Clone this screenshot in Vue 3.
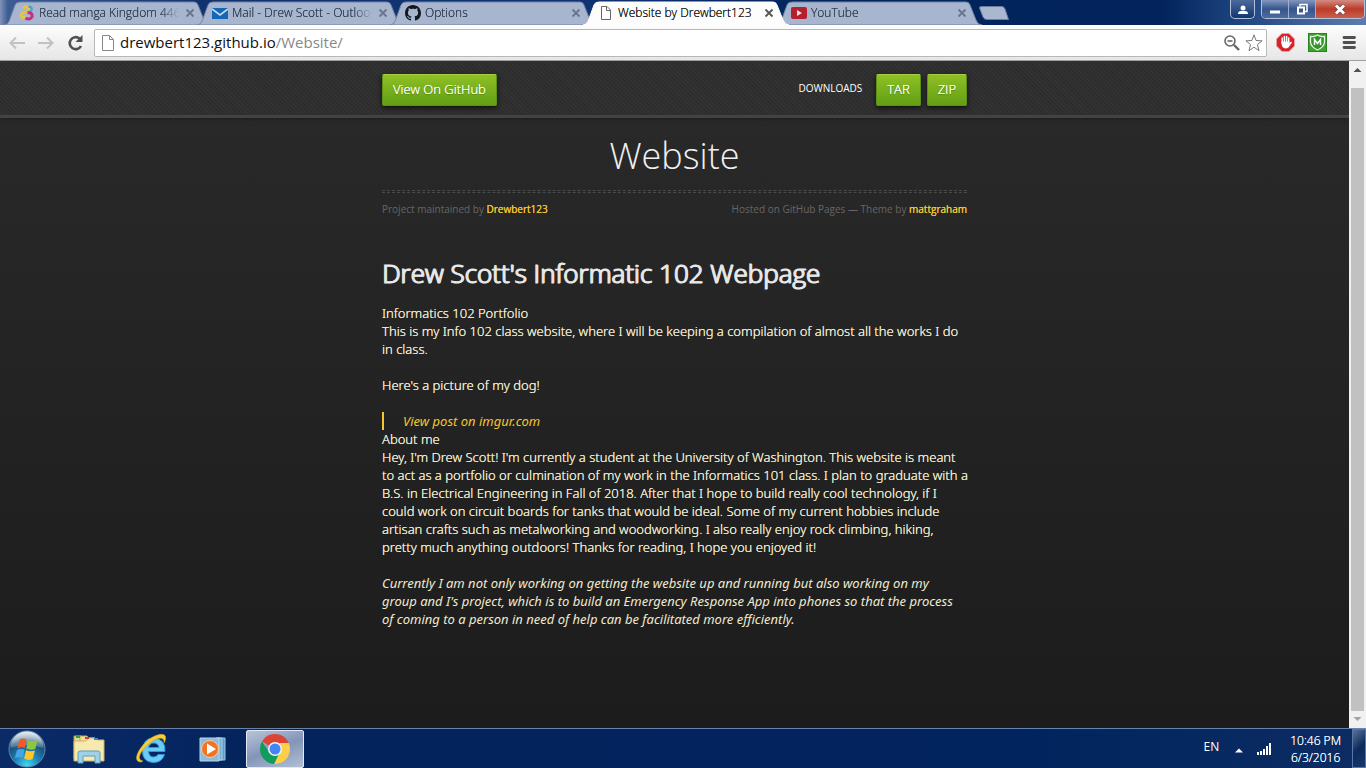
<script setup>
const tabs = [
  { title: 'Read manga Kingdom 446', icon: 'manga', active: false },
  { title: 'Mail - Drew Scott - Outlook', icon: 'mail', active: false },
  { title: 'Options', icon: 'github', active: false },
  { title: 'Website by Drewbert123', icon: 'page', active: true },
  { title: 'YouTube', icon: 'youtube', active: false },
]
</script>

<template>
  <div class="desktop">
    <header class="browser">
      <div class="strip">
        <nav class="tabs" aria-label="Tabs">
          <div v-for="t in tabs" :key="t.title" class="tab" :class="{ active: t.active }">
            <svg class="shape" viewBox="0 0 206 24" preserveAspectRatio="none" aria-hidden="true">
              <path d="M0 24 C5 23 5 20 7 15 L11 4 Q12 1 16 1 H190 Q193 1 194 4 L200 19 Q202 24 206 24 Z" />
            </svg>
            <svg v-if="t.icon === 'manga'" class="fav" viewBox="0 0 16 16">
              <path d="M4 3.500 Q7 0 9.500 3 Q10.500 6 7 7.500" fill="none" stroke="#ecc53c" stroke-width="2.800" />
              <path d="M9.500 1.500 Q13.500 2 12.500 5 Q11.500 7 9 7.500" fill="none" stroke="#4aa3cf" stroke-width="2.400" />
              <path d="M6 7.500 Q1 8 2.500 11.500 Q4 13.500 7 11.500" fill="none" stroke="#ecc53c" stroke-width="2.600" />
              <path d="M8.500 7.500 Q14 7.500 13 12 Q10.500 15.500 6.500 13" fill="none" stroke="#c52c8c" stroke-width="3" />
            </svg>
            <svg v-else-if="t.icon === 'mail'" class="fav" viewBox="0 0 16 16">
              <rect x="0" y="3" width="16" height="11" fill="#1268b4" />
              <path d="M0 4 L8 10 L16 4" fill="none" stroke="#c9d9ec" stroke-width="1.6" />
            </svg>
            <svg v-else-if="t.icon === 'github'" class="fav" viewBox="0 0 16 16">
              <path fill="#12171f" d="M8 0C3.58 0 0 3.58 0 8c0 3.54 2.29 6.53 5.47 7.59.4.07.55-.17.55-.38 0-.19-.01-.82-.01-1.49-2.01.37-2.53-.49-2.69-.94-.09-.23-.48-.94-.82-1.13-.28-.15-.68-.52-.01-.53.63-.01 1.08.58 1.23.82.72 1.21 1.87.87 2.33.66.07-.52.28-.87.51-1.07-1.78-.2-3.64-.89-3.64-3.95 0-.87.31-1.59.82-2.15-.08-.2-.36-1.02.08-2.12 0 0 .67-.21 2.2.82.64-.18 1.32-.27 2-.27s1.36.09 2 .27c1.53-1.04 2.2-.82 2.2-.82.44 1.1.16 1.92.08 2.12.51.56.82 1.27.82 2.15 0 3.07-1.87 3.75-3.65 3.95.29.25.54.73.54 1.48 0 1.07-.01 1.93-.01 2.2 0 .21.15.46.55.38A8.01 8.01 0 0 0 16 8c0-4.42-3.58-8-8-8z" />
            </svg>
            <svg v-else-if="t.icon === 'page'" class="fav" viewBox="0 0 16 16">
              <path d="M3.5 1.5 H9 L12.500 5 V14.500 H3.500 Z M8.500 1.500 V5.500 H12.500" fill="#fff" stroke="#666" />
            </svg>
            <svg v-else class="fav" viewBox="0 0 16 16">
              <rect x="0" y="2" width="16" height="12" rx="2" fill="#b5202c" />
              <path d="M6 5 L11 8 L6 11 Z" fill="#e8dfe6" />
            </svg>
            <span class="title">{{ t.title }}</span>
            <button class="x" type="button" aria-label="Close tab">
              <svg viewBox="0 0 10 10"><path d="M1.500 1.500 L8.500 8.500 M8.500 1.500 L1.500 8.500" stroke-width="1.800" /></svg>
            </button>
          </div>
        </nav>
        <button class="newtab" type="button" aria-label="New tab">
          <svg viewBox="0 0 30 14"><path d="M3 0.500 H23 Q25 0.500 26 3 L29.500 13.500 H8 Q5 13.500 4 11 L0.500 2 Q0 0.500 3 0.500 Z" fill="#a9b8d0" stroke="#6b7c9c" /></svg>
        </button>
        <div class="wincontrols">
          <button class="user" type="button" aria-label="Profile">
            <svg viewBox="0 0 10 10"><circle cx="5" cy="3" r="2.500" fill="#fff" /><path d="M0 9 Q0 6 3 6 H7 Q10 6 10 9 Z" fill="#fff" /></svg>
          </button>
          <div class="group">
            <button class="min" type="button" aria-label="Minimize"><svg viewBox="0 0 12 12"><rect x="1" y="7" width="10" height="3" fill="#fff" /></svg></button>
            <button class="max" type="button" aria-label="Restore"><svg viewBox="0 0 12 12"><path d="M4 3 V1 H11 V8 H9" fill="none" stroke="#fff" stroke-width="1.500" /><rect x="2" y="4" width="6" height="6" fill="none" stroke="#fff" stroke-width="2" /></svg></button>
            <button class="close" type="button" aria-label="Close"><svg viewBox="0 0 12 12"><path d="M2 2 L10 10 M10 2 L2 10" stroke="#62424d" stroke-width="4.500" /><path d="M2 2 L10 10 M10 2 L2 10" stroke="#fff" stroke-width="3" /></svg></button>
          </div>
        </div>
      </div>

      <div class="toolbar">
        <button class="tool back" type="button" aria-label="Back"><svg viewBox="0 0 18 18"><path d="M17 9 H3 M8 3.500 L2.500 9 L8 14.500" fill="none" stroke="#c2c2c2" stroke-width="2" /></svg></button>
        <button class="tool fwd" type="button" aria-label="Forward"><svg viewBox="0 0 18 18"><path d="M1 9 H15 M10 3.500 L15.500 9 L10 14.500" fill="none" stroke="#c2c2c2" stroke-width="2" /></svg></button>
        <button class="tool reload" type="button" aria-label="Reload"><svg viewBox="0 0 18 18"><path d="M15 12 A6 6 0 1 1 13.500 4.500" fill="none" stroke="#505050" stroke-width="2.600" /><path d="M16.500 1 V8 H9.500 Z" fill="#505050" /></svg></button>
        <div class="omnibox">
          <svg class="doc" viewBox="0 0 12 16"><path d="M1 0.500 H7.500 L11.500 4.500 V15.500 H0.500 V0.500 Z M7.500 0.500 V4.500 H11.500" fill="#fff" stroke="#888" /></svg>
          <a class="url" href="#"><span class="host">drewbert123.github.io</span>/Website/</a>
          <button class="mini" type="button" aria-label="Zoom"><svg viewBox="0 0 18 18"><circle cx="7" cy="7" r="5" fill="none" stroke="#666" stroke-width="1.600" /><path d="M4.500 7 H9.500" stroke="#666" stroke-width="1.600" /><path d="M11 11 L16 16" stroke="#666" stroke-width="2.400" /></svg></button>
          <button class="mini" type="button" aria-label="Bookmark"><svg viewBox="0 0 20 20"><path d="M10 1 L12.300 7.200 L19 7.600 L13.800 11.700 L15.600 18.500 L10 14.700 L4.400 18.500 L6.200 11.700 L1 7.600 L7.700 7.200 Z" fill="#fff" stroke="#777" stroke-width="1.100" /></svg></button>
        </div>
        <button class="ext" type="button" aria-label="Ad blocker"><svg viewBox="0 0 19 19"><path d="M6 0.500 H13 L18.500 6 V13 L13 18.500 H6 L0.500 13 V6 Z" fill="#d5232b" stroke="#e9a0a2" /><path d="M6.200 10 V5 M8.400 9 V3.500 M10.600 9 V3.500 M12.700 10 V5" stroke="#fff" stroke-width="1.500" stroke-linecap="round" /><path d="M5.500 8.500 H13.400 V10.500 L15 8.500 L16 9.500 L12.500 14.500 Q9 16.500 6.500 14 Q5.500 12.500 5.500 10 Z" fill="#fff" /></svg></button>
        <button class="ext" type="button" aria-label="Site advisor"><svg viewBox="0 0 19 19"><rect x="0.500" y="0.500" width="18" height="18" fill="#3ca52d" stroke="#23851b" /><path d="M2.500 3.500 Q7 4 9.500 2 Q12 4 16.500 3.500 V9 Q16 14 9.500 17 Q3 14 2.500 9 Z" fill="#35932c" stroke="#e5f5e2" stroke-width="1.300" /><path d="M6.500 12 V6.500 L9.500 10.500 L12.500 6.500 V12" fill="none" stroke="#fff" stroke-width="1.500" /></svg></button>
        <button class="ext menu" type="button" aria-label="Menu"><svg viewBox="0 0 19 19"><path d="M4 4.500 H14.500 M4 9.500 H14.500 M4 14.500 H14.500" stroke="#505050" stroke-width="2.800" stroke-linecap="round" /></svg></button>
      </div>
    </header>

    <div class="viewport">
      <div class="page">
        <div class="topbar">
          <div class="wrap bar">
            <a class="btn" href="#">View On GitHub</a>
            <div class="downloads">
              <span class="label">DOWNLOADS</span>
              <a class="btn" href="#">TAR</a>
              <a class="btn" href="#">ZIP</a>
            </div>
          </div>
        </div>
        <main class="wrap">
          <div class="titlebox">
            <h1>Website</h1>
          </div>
          <div class="credits">
            <span>Project maintained by <a href="#">Drewbert123</a></span>
            <span>Hosted on GitHub Pages — Theme by <a href="#">mattgraham</a></span>
          </div>
          <h2>Drew Scott's Informatic 102 Webpage</h2>
          <div class="copy">
            <p class="flush">Informatics 102 Portfolio</p>
            <p>This is my Info 102 class website, where I will be keeping a compilation of almost all the works I do<br />in class.</p>
            <p>Here's a picture of my dog!</p>
            <blockquote><a href="#">View post on imgur.com</a></blockquote>
            <p class="flush">About me</p>
            <p>Hey, I'm Drew Scott! I'm currently a student at the University of Washington. This website is meant<br />to act as a portfolio or culmination of my work in the Informatics 101 class. I plan to graduate with a<br />B.S. in Electrical Engineering in Fall of 2018. After that I hope to build really cool technology, if I<br />could work on circuit boards for tanks that would be ideal. Some of my current hobbies include<br />artisan crafts such as metalworking and woodworking. I also really enjoy rock climbing, hiking,<br />pretty much anything outdoors! Thanks for reading, I hope you enjoyed it!</p>
            <p><em>Currently I am not only working on getting the website up and running but also working on my<br />group and I's project, which is to build an Emergency Response App into phones so that the process<br />of coming to a person in need of help can be facilitated more efficiently.</em></p>
          </div>
        </main>
      </div>
      <div class="scroll" aria-hidden="true">
        <svg viewBox="0 0 17 17"><path d="M4.500 11 L8.500 7 L12.500 11 Z" fill="#505050" /></svg>
        <div class="track"><div class="thumb"></div></div>
        <svg viewBox="0 0 17 17"><path d="M4.500 6 L8.500 10 L12.500 6 Z" fill="#a3a3a3" /></svg>
      </div>
    </div>

    <footer class="taskbar">
      <button class="start" type="button" aria-label="Start">
        <svg viewBox="0 0 38 38">
          <defs>
            <radialGradient id="orb" cx="50%" cy="95%" r="90%"><stop offset="0" stop-color="#3fd8f5" /><stop offset="0.400" stop-color="#1c7fb4" /><stop offset="0.750" stop-color="#1b4a74" /><stop offset="1" stop-color="#9db8cc" /></radialGradient>
            <linearGradient id="gloss" x1="0" y1="0" x2="0" y2="1"><stop offset="0" stop-color="#fff" stop-opacity="0.700" /><stop offset="1" stop-color="#fff" stop-opacity="0.200" /></linearGradient>
          </defs>
          <circle cx="19" cy="19" r="18" fill="url(#orb)" stroke="#5f88a8" />
          <path d="M2.500 18 A16.500 16.500 0 0 1 35.500 18 Q19 12 2.500 18 Z" fill="url(#gloss)" />
          <path d="M11.500 9.500 Q15 7.500 18.500 9.500 L16.800 18 Q13.500 16.500 9.300 18.500 Z" fill="#ee5b26" />
          <path d="M20 10 Q24 12.500 29.500 10 L27.300 19 Q22.500 20.500 18.300 18.500 Z" fill="#8ec63f" />
          <path d="M9 20 Q13 18 16.500 19.700 L14.700 28 Q11 26.500 6.700 28.500 Z" fill="#45a5e6" />
          <path d="M18 20.200 Q22 22 27 20.500 L24.700 29 Q20 31 16.100 28.500 Z" fill="#fdc827" />
        </svg>
      </button>
      <button class="task" type="button" aria-label="Explorer">
        <svg viewBox="0 0 34 32">
          <path d="M2 3 H9 L11 5 H16 V26 H2 Z" fill="#ecd98c" stroke="#b89c4f" />
          <path d="M8 3 H15 L17 5 H23 V26 H8 Z" fill="#f0df9b" stroke="#c2a85f" />
          <path d="M15 7 L17 5 H23 L25 7 H32 V28 H2 V8 H14 Z" fill="#f6e8ae" stroke="#cdb267" />
          <path d="M4 2 H8 V5 H4 Z" fill="#2f9c52" /><path d="M13 4 H17 V6 H13 Z" fill="#d0432c" /><path d="M22 5 H26 V7 H22 Z" fill="#3a86c8" />
          <path d="M6 30 V20 Q6 18 8 18 H26 Q28 18 28 20 V30 H23 V23 H11 V30 Z" fill="#9fd2e8" stroke="#5ba0c4" />
        </svg>
      </button>
      <button class="task" type="button" aria-label="Internet Explorer">
        <svg viewBox="0 0 34 32">
          <path d="M31 18.500 H14.500 Q15 24 19.500 24 Q22.500 24 24 21.500 H30.500 Q28 29.500 19.500 29.500 Q8 29 8.500 17 Q9.500 5 19.500 5 Q31.500 5.500 31 18.500 Z M14.500 14.500 H25 Q24 10 19.700 10 Q15.500 10 14.500 14.500 Z" fill="#6ccbf5" stroke="#2f97d8" fill-rule="evenodd" />
          <path d="M7 29 C-2 29 4 16 13 8 C20 2 30 -1 31.500 3.500 C32 6 31 8 30 10 C31 2 21 5 13.500 12 C6 19 2 27 9 28 Z" fill="#f8cf33" stroke="#d89f1a" stroke-width="0.600" />
        </svg>
      </button>
      <button class="task" type="button" aria-label="Media Player">
        <svg viewBox="0 0 34 32">
          <path d="M22 5 H29 V27 H22 Z" fill="#5e9cc8" stroke="#9bc8e4" /><path d="M20 5 H26 V27 H20 Z" fill="#79afd4" stroke="#a9d0e8" />
          <path d="M4 5 H23 V28 H4 Z" fill="#8ebbdc" stroke="#b7d7eb" />
          <circle cx="14" cy="16" r="8.500" fill="#ee7526" stroke="#f9c9a0" /><path d="M11 10.500 L20 16 L11 21.500 Z" fill="#fff" />
        </svg>
      </button>
      <button class="task running" type="button" aria-label="Chrome">
        <svg viewBox="0 0 34 32">
          <path d="M17 16 L4 8.500 A15 15 0 0 1 30.700 10 H17 Z" fill="#db4437" />
          <path d="M17 16 L22 10 H30.700 A15 15 0 0 1 16 31 L21 19 Z" fill="#fdcf4b" />
          <path d="M4 8.500 L11 19 L21.500 20 L16 31 A15 15 0 0 1 4 8.500 Z" fill="#149a5b" />
          <circle cx="17" cy="16" r="7" fill="#f3f3f3" /><circle cx="17" cy="16" r="5.500" fill="#4285f4" />
        </svg>
      </button>
      <div class="tray">
        <span class="lang">EN</span>
        <svg class="up" viewBox="0 0 8 5"><path d="M0 4.500 L4 0.500 L8 4.500 Z" fill="#fff" /></svg>
        <svg class="signal" viewBox="0 0 15 12"><path d="M0 9 H2 V12 H0 Z M3 8 H5 V12 H3 Z M6 6 H8 V12 H6 Z M9 3 H11 V12 H9 Z M12 0 H14 V12 H12 Z" fill="#fff" /></svg>
        <div class="clock"><span>10:46 PM</span><span>6/3/2016</span></div>
      </div>
      <button class="peek" type="button" aria-label="Show desktop"></button>
    </footer>
  </div>
</template>

<style>
body {
  margin: 0;
  overflow: hidden;
}
</style>

<style scoped>
.desktop {
  display: flex;
  flex-direction: column;
  height: 100vh;
  font-family: 'Open Sans', 'Noto Sans', sans-serif;
  background: #1e1e1e;
}
button {
  margin: 0;
  padding: 0;
  border: 0;
  background: none;
  font: inherit;
}
svg {
  display: block;
}
a {
  text-decoration: none;
}

/* tab strip */
.strip {
  display: flex;
  height: 25px;
  padding-left: 4px;
  background: linear-gradient(90deg, #8093b8 0, #3c5c94 8px, #12336f 200px, #0e3272 590px, #03265f 800px, #02235c 1160px, #1e4580 1240px, #5e7dae 100%);
}
.tabs {
  display: flex;
}
.tab {
  position: relative;
  display: flex;
  align-items: center;
  box-sizing: border-box;
  width: 193px;
  padding: 0 2px 0 15px;
  color: #303b4e;
  font-size: 12px;
  font-weight: 300;
  text-shadow: 0 0 0 currentColor;
}
.shape {
  position: absolute;
  left: 0;
  top: 1px;
  width: 206px;
  height: 24px;
  fill: #a7b6ce;
  stroke: #7184a5;
}
.active {
  z-index: 2;
  color: #111;
}
.active .shape {
  fill: #fdfdfd;
  stroke: #fdfdfd;
}
.fav {
  position: relative;
  flex: none;
  width: 16px;
  height: 16px;
}
.title {
  position: relative;
  flex: 1;
  margin: 0 6px 0 4px;
  overflow: hidden;
  white-space: nowrap;
  mask-image: linear-gradient(90deg, #000 calc(100% - 18px), transparent);
}
.active .title {
  mask-image: none;
}
.x {
  position: relative;
  width: 10px;
}
.x svg {
  width: 10px;
  height: 10px;
  stroke: #68758c;
}
.active .x svg {
  stroke: #555;
}
.newtab {
  align-self: center;
  width: 30px;
  margin-left: 10px;
}
.wincontrols {
  display: flex;
  align-items: flex-start;
  gap: 6px;
  margin-left: auto;
  margin-right: 1px;
}
.user,
.group {
  display: flex;
  box-sizing: border-box;
  height: 19px;
  overflow: hidden;
  border: 1px solid #b4c2d9;
  border-top: 0;
  border-radius: 0 0 5px 5px;
}
.user {
  justify-content: center;
  width: 25px;
  padding-top: 2px;
  background: linear-gradient(#4c699c, #133670);
}
.user svg {
  width: 10px;
}
.group button {
  display: flex;
  justify-content: center;
  width: 27px;
  padding-top: 1px;
  border-right: 1px solid #9dafcc;
  background: linear-gradient(#8297bc, #35558d 50%, #4d6ca0);
}
.group svg {
  width: 12px;
}
.group .close {
  width: 48px;
  border-right: 0;
  background: linear-gradient(#d38c82, #bb3b29 50%, #c9604c);
}

/* toolbar */
.toolbar {
  display: flex;
  align-items: center;
  box-sizing: border-box;
  height: 36px;
  padding: 0 7px 0 8px;
  border-bottom: 1px solid #a0a0a0;
  background: linear-gradient(#fdfdfd, #e6e6e6);
}
.tool {
  width: 18px;
  margin-right: 11px;
}
.reload {
  margin-right: 10px;
}
.omnibox {
  display: flex;
  flex: 1;
  align-items: center;
  box-sizing: border-box;
  height: 28px;
  margin-right: 9px;
  padding: 0 3px 0 7px;
  border: 1px solid #b8b8b8;
  border-radius: 2px;
  background: #fff;
}
.doc {
  width: 12px;
  height: 16px;
}
.url {
  flex: 1;
  margin-left: 6px;
  padding-bottom: 2px;
  color: #888;
  font-size: 15px;
  line-height: 20px;
}
.host {
  color: #111;
}
.mini {
  width: 18px;
  margin-left: 4px;
}
.ext {
  width: 19px;
  margin-right: 13px;
}
.menu {
  margin-right: 0;
}

/* web page */
.viewport {
  display: flex;
  flex: 1;
  min-height: 0;
}
.page {
  flex: 1;
  overflow: hidden;
  background: linear-gradient(#2a2a2a, #1c1c1c);
  color: #f0ead0;
  font-size: 13px;
  line-height: 18px;
}
.wrap {
  width: 100%;
  max-width: 585px;
  margin: 0 auto;
}
.topbar {
  border-bottom: 3px solid #434343;
  background: repeating-linear-gradient(45deg, #2c2c2c 0, #2c2c2c 1px, #333 2px, #333 3px);
  box-shadow: 0 1px 4px #1b1b1b;
}
.bar {
  display: flex;
  justify-content: space-between;
  align-items: center;
  height: 54px;
}
.btn {
  display: block;
  box-sizing: border-box;
  height: 32px;
  margin-top: 4px;
  padding: 0 10px;
  border: 1px solid #5d9016;
  border-top-color: #a5cf43;
  border-radius: 2px;
  background: linear-gradient(#8fbf26, #629f14);
  box-shadow: 0 2px 5px #111;
  color: #fff;
  font-size: 13px;
  font-weight: 300;
  line-height: 29px;
  text-shadow: 0 0 0 #fff, 0 1px 1px #4b7a10;
}
.downloads {
  display: flex;
  align-items: center;
  gap: 6px;
}
.label {
  margin-right: 8px;
  color: #fff;
  font-size: 10px;
}
.titlebox {
  padding: 12px 0 8px;
  border-bottom: 1px dashed #4a4a4a;
}
h1 {
  margin: 0;
  color: #f0f0f0;
  font-size: 36px;
  font-weight: 300;
  line-height: 52px;
  text-align: center;
}
.credits {
  display: flex;
  justify-content: space-between;
  margin-top: 1px;
  padding-top: 7px;
  border-top: 1px dashed #4a4a4a;
  color: #666;
  font-size: 10px;
}
.credits a,
blockquote a {
  color: #f5c62e;
}
.credits a {
  text-shadow: 0 0 0 #f5c62e;
}
h2 {
  margin: 36px 0 12px;
  color: #e8e8e8;
  font-size: 26px;
  font-weight: 300;
  line-height: 38px;
  white-space: nowrap;
  text-shadow: 1px 0 0 #e8e8e8;
  -webkit-text-stroke: 1px #e8e8e8;
}
.copy {
  margin-right: -12px;
  font-family: 'Noto Sans', 'Open Sans', sans-serif;
  font-weight: 300;
  text-shadow: 0 0 0 currentColor;
}
p {
  margin: 0 0 18px;
}
.flush {
  margin: 0;
}
em,
blockquote {
  font-style: italic;
  font-weight: 400;
  text-shadow: none;
}
blockquote {
  margin: 0;
  padding-left: 19px;
  border-left: 2px solid #f5c62e;
}
.scroll {
  display: flex;
  flex-direction: column;
  width: 17px;
  background: #f1f1f1;
}
.scroll svg {
  width: 17px;
  height: 17px;
}
.track {
  flex: 1;
  padding: 10px 2px 0;
}
.thumb {
  height: 100%;
  background: #c1c1c1;
}

/* taskbar */
.taskbar {
  display: flex;
  align-items: center;
  box-sizing: border-box;
  height: 40px;
  border-top: 1px solid #6583ae;
  background: linear-gradient(90deg, #0a2b66, #02235c 20%, #02245e 75%, #0b2d63);
  color: #fff;
  font-size: 12px;
}
.start {
  width: 38px;
  margin: 0 14px 0 8px;
}
.task {
  display: flex;
  justify-content: center;
  align-items: center;
  box-sizing: border-box;
  width: 58px;
  height: 38px;
  margin-right: 4px;
}
.task svg {
  width: 34px;
  height: 32px;
}
.running {
  border: 1px solid #e3e9f2;
  border-radius: 2px;
  background: linear-gradient(160deg, #b9c4d8, #8395b8 50%, #b4bfd5);
}
.tray {
  display: flex;
  align-items: center;
  margin-left: auto;
  margin-right: 11px;
}
.lang {
  padding-bottom: 4px;
}
.up {
  width: 8px;
  margin: 3px 14px 0 16px;
}
.signal {
  width: 15px;
  margin: 0 18px 0 0;
}
.clock {
  display: flex;
  flex-direction: column;
  align-items: center;
  font-weight: 300;
  line-height: 17px;
  text-shadow: 0 0 0 #fff;
}
.peek {
  box-sizing: border-box;
  width: 14px;
  height: 39px;
  border: 1px solid #5877a5;
  background: linear-gradient(135deg, #5c7396, #0c2a5c 50%, #18386e);
}
</style>
